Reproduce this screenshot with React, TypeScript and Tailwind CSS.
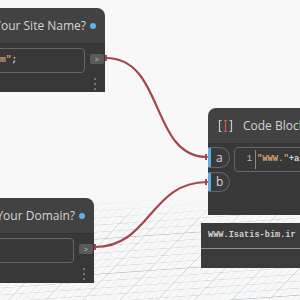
import React from "react";

const sans = "font-['Open_Sans','Noto_Sans',sans-serif]";
const mono = "font-['Liberation_Mono','DejaVu_Sans_Mono',monospace]";

const GridFloor = () => (
  <svg className="absolute inset-0" width="300" height="300" viewBox="0 0 300 300">
    <defs>
      <pattern id="minor" width="8" height="7" patternUnits="userSpaceOnUse" patternTransform="rotate(-4) skewX(-48)">
        <path d="M8 0H0V7" fill="none" stroke="#cdd5db" strokeWidth="0.8" />
      </pattern>
      <pattern id="major" width="40" height="35" patternUnits="userSpaceOnUse" patternTransform="rotate(-4) skewX(-48)">
        <path d="M40 0H0V35" fill="none" stroke="#bac3ca" strokeWidth="1" />
      </pattern>
      <linearGradient id="fade" x1="0" y1="198" x2="0" y2="222" gradientUnits="userSpaceOnUse">
        <stop offset="0" stopColor="#fff" stopOpacity="0" />
        <stop offset="1" stopColor="#fff" stopOpacity="1" />
      </linearGradient>
      <mask id="floor">
        <rect x="0" y="0" width="300" height="300" fill="url(#fade)" />
      </mask>
    </defs>
    <g mask="url(#floor)">
      <rect x="0" y="0" width="300" height="300" fill="url(#minor)" />
      <rect x="0" y="0" width="300" height="300" fill="url(#major)" />
    </g>
  </svg>
);

const Wires = () => (
  <svg className="absolute inset-0" width="300" height="300" viewBox="0 0 300 300">
    <g fill="none" stroke="#a4454d" strokeWidth="2.2" strokeLinecap="round">
      <path d="M106 58 C165 58 150 157 207 157" />
      <path d="M95 247 C150 247 150 182 207 182" />
    </g>
    <g fill="#a4454d">
      <rect x="105" y="55" width="2" height="6" />
      <rect x="205" y="154" width="2" height="6" />
      <rect x="94" y="244" width="2" height="6" />
      <rect x="205" y="179" width="2" height="6" />
    </g>
  </svg>
);

const Dots = ({ className }: { className: string }) => (
  <div className={`flex flex-col gap-[3px] ${className}`}>
    <span className="w-[2px] h-[2px] rounded-full bg-[#8a8a8a]" />
    <span className="w-[2px] h-[2px] rounded-full bg-[#8a8a8a]" />
    <span className="w-[2px] h-[2px] rounded-full bg-[#8a8a8a]" />
  </div>
);

const OutPort = ({ className }: { className: string }) => (
  <div className={`flex items-center justify-center rounded-[2px] bg-[#5a5a5a] text-[7px] leading-none text-[#d8d8d8] ${sans} ${className}`}>
    &gt;
  </div>
);

const InputNode = ({
  title,
  value,
  className,
}: {
  title: string;
  value?: React.ReactNode;
  className: string;
}) => (
  <div className={`absolute flex flex-col rounded-tr-[8px] overflow-hidden ${className}`}>
    <div className={`flex items-center justify-end gap-[4px] h-[35px] pr-[9px] bg-[#424242] text-[12px] text-[#d4d4d4] whitespace-nowrap ${sans}`}>
      <span>{title}</span>
      <span className="w-[6px] h-[6px] rounded-full bg-[#5bb5e8]" />
    </div>
    <div className="flex flex-1 bg-[#383838] pl-[3px] pr-[1px] border-t border-[#333]">
      <div className={`flex-1 mt-[4px] h-[25px] rounded-[4px] border-[1.5px] border-[#666] flex items-center pl-[11px] text-[9.5px] font-bold whitespace-nowrap ${mono}`}>
        {value}
      </div>
      <div className="flex flex-col w-[14px] ml-[5px]">
        <OutPort className="mt-[10px] h-[10px]" />
        <Dots className="mt-[14px] ml-[4px]" />
      </div>
    </div>
  </div>
);

const CodeBlock = () => (
  <div className="absolute left-[208px] top-[108px] w-[120px] h-[107px] flex flex-col rounded-tl-[8px] overflow-hidden">
    <div className={`flex items-center h-[35px] bg-[#424242] pl-[10px] text-[12px] text-[#d4d4d4] whitespace-nowrap ${sans}`}>
      <svg width="15" height="14" viewBox="0 0 15 14" fill="none">
        <path d="M3.5 1.5H1.5V12.5H3.5" stroke="#c8c8c8" strokeWidth="1.2" />
        <path d="M11.5 1.5H13.5V12.5H11.5" stroke="#c8c8c8" strokeWidth="1.2" />
        <path d="M6 1.5H9M7.5 1.5V12.5M6 12.5H9" stroke="#d9534f" strokeWidth="1.2" />
      </svg>
      <span className="ml-[10px]">Code Block</span>
    </div>
    <div className="flex flex-1 bg-[#383838] border-t border-[#333]">
      <div className={`flex flex-col gap-[4px] mt-[3px] text-[12px] text-[#d4d4d4] ${sans}`}>
        <div className="flex items-center w-[22px] h-[21px] rounded-r-[10px] border border-l-0 border-[#666] bg-[#3b3b3b]">
          <span className="w-[3px] h-full bg-[#5bb0df]" />
          <span className="ml-[5px] leading-none">a</span>
        </div>
        <div className="flex items-center w-[22px] h-[20px] rounded-r-[10px] border border-l-0 border-[#666] bg-[#3b3b3b]">
          <span className="w-[3px] h-full bg-[#5bb0df]" />
          <span className="ml-[5px] leading-none">b</span>
        </div>
      </div>
      <div className={`flex items-center ml-[4px] mt-[3px] h-[25px] flex-1 rounded-[4px] border-[1.5px] border-[#666] text-[8.8px] font-bold whitespace-nowrap ${mono}`}>
        <span className="w-[17px] text-right font-normal text-[#bdbdbd]">1</span>
        <span className="ml-[3px] w-px h-[19px] bg-[#8a8a8a]" />
        <span className="ml-px text-[#d9a066]">"WWW."</span>
        <span className="text-[#d4d4d4]">+a+</span>
        <span className="text-[#d9a066]">"."</span>
        <span className="text-[#d4d4d4]">+b;</span>
      </div>
    </div>
  </div>
);

const Watch = () => (
  <div className="absolute left-[201px] top-[223px] w-[110px] h-[45px] flex flex-col bg-[#3b3b3b]">
    <div className={`flex items-center h-[25px] pl-[7px] text-[8.6px] font-bold text-[#d0d0d0] whitespace-nowrap ${mono}`}>
      WWW.Isatis-bim.ir
    </div>
    <div className="h-px bg-[#8f8f8f]" />
  </div>
);

export default function App() {
  return (
    <div className="relative w-[300px] h-[300px] overflow-hidden bg-[#f8f8f8]">
      <GridFloor />
      <Wires />
      <InputNode
        title="Your Site Name?"
        className="left-[-60px] top-[8px] w-[165px] h-[84px]"
        value={
          <span className="ml-[-12px]">
            <span className="text-[#d9a066]">"Isatis-bim"</span>
            <span className="text-[#d4d4d4]">;</span>
          </span>
        }
      />
      <InputNode
        title="Your Domain?"
        className="left-[-60px] top-[198px] w-[154px] h-[85px]"
      />
      <CodeBlock />
      <Watch />
    </div>
  );
}
